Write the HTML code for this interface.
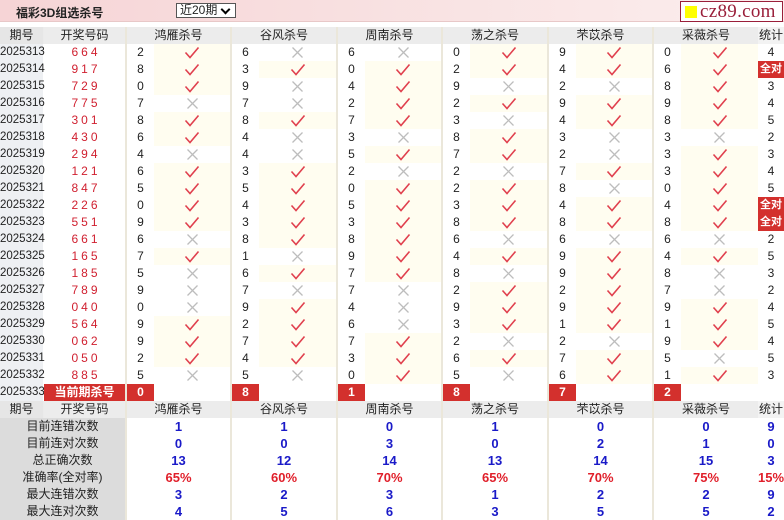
<!DOCTYPE html>
<html><head><meta charset="utf-8">
<style>
*{margin:0;padding:0;box-sizing:border-box}
body{width:784px;height:520px;overflow:hidden;background:#fff;font-family:"Liberation Sans","Noto Sans CJK SC",sans-serif;font-size:12px;color:#222;position:relative}
.top{position:absolute;left:0;top:0;width:784px;height:22px;background:linear-gradient(90deg,#f6d4d6 0%,#f9e4e4 60%,#fbeeee 100%);border-bottom:1px solid #e8c8c8}
.title{position:absolute;left:16px;top:4px;font-size:12px;font-weight:bold;color:#222}
.sel{position:absolute;left:176px;top:3px;width:60px;height:15px;border:1px solid #555;background:#fff;font-size:12px;line-height:13px;padding-left:3px}
.sel:after{content:"";position:absolute;right:6px;top:2px;width:5px;height:5px;border-right:2px solid #000;border-bottom:2px solid #000;transform:rotate(45deg)}
.logo{position:absolute;left:680px;top:1px;width:103px;height:21px;border:1px solid #9a1f3a;background:#fff;font-family:"Liberation Serif",serif;font-size:19px;color:#9a1f3a;line-height:19px;letter-spacing:0.3px;white-space:nowrap;overflow:hidden}
.logo i{display:inline-block;width:12px;height:12px;background:#ffff00;margin:0 3px 0 4px;vertical-align:-1px}
.tb{position:absolute;left:0;top:27px;width:784px}
.r{display:flex;height:17px;line-height:17px}
.r>*{flex:none;text-align:center;display:block;height:17px}
.p{width:43px;background:#eef0f3;font-size:11.5px;margin-right:1px}
.d{width:81px;color:#d01f2f;letter-spacing:3px;padding-left:3px}
.g{display:flex;border-left:2px solid #ebe7da}
.g5{width:105px}.g6{width:106px}
.g u{text-decoration:none;width:27px;text-align:center;display:block}
.g em{display:block;flex:1;height:17px}
.g em.y{background:#fffdf0}
.st{width:26px}
svg{display:block;margin:0 auto}
.h{background:#ebebeb}
.h .p{background:#e6e6e6;font-size:12px}
.h .d{color:#222;letter-spacing:0;background:#ececec;padding:0}
.h .g{justify-content:center;background:#ececec}
.h .st{background:#f3f3f3}
.all{background:#d3302d;color:#fff;font-weight:bold;font-size:11px}
.cur .d{background:#d3302d;color:#fff;font-weight:bold;letter-spacing:0;padding:0}
.cur .g u{background:#d3302d;color:#fff;font-weight:bold}
.s .lab{width:125px;background:#dcdcdc;font-size:12px}
.s .g{justify-content:center;color:#1a1ac8;font-weight:bold;font-size:13px}
.s .st{color:#1a1ac8;font-weight:bold;font-size:13px}
.s.pc .g,.s.pc .st{color:#e01f2a}
</style></head><body>
<svg width="0" height="0" style="position:absolute">
<symbol id="ok" viewBox="0 0 16 13"><path d="M1.5 6.5 L6 11.5 L14.5 1.5" fill="none" stroke="#e0404e" stroke-width="1.6"/></symbol>
<symbol id="no" viewBox="0 0 13 13"><path d="M1.5 1.5 L11.5 11.5 M11.5 1.5 L1.5 11.5" fill="none" stroke="#bdbdbd" stroke-width="1.3"/></symbol>
</svg>
<div class="top"><div class="title">福彩3D组选杀号</div><div class="sel">近20期</div><div class="logo"><i></i>cz89.com</div></div>
<div class="tb">
<div class="r h"><span class="p">期号</span><span class="d">开奖号码</span><span class="g g5">鸿雁杀号</span><span class="g g6">谷风杀号</span><span class="g g5">周南杀号</span><span class="g g6">荡之杀号</span><span class="g g5">芣苡杀号</span><span class="g g6">采薇杀号</span><span class="st">统计</span></div>
<div class="r"><span class="p">2025313</span><span class="d">664</span><span class="g g5"><u>2</u><em class="y"><svg width="16" height="17"><use href="#ok" y="2" width="16" height="13"/></svg></em></span><span class="g g6"><u>6</u><em><svg width="13" height="17"><use href="#no" y="2" width="13" height="13"/></svg></em></span><span class="g g5"><u>6</u><em><svg width="13" height="17"><use href="#no" y="2" width="13" height="13"/></svg></em></span><span class="g g6"><u>0</u><em class="y"><svg width="16" height="17"><use href="#ok" y="2" width="16" height="13"/></svg></em></span><span class="g g5"><u>9</u><em class="y"><svg width="16" height="17"><use href="#ok" y="2" width="16" height="13"/></svg></em></span><span class="g g6"><u>0</u><em class="y"><svg width="16" height="17"><use href="#ok" y="2" width="16" height="13"/></svg></em></span><span class="st">4</span></div>
<div class="r"><span class="p">2025314</span><span class="d">917</span><span class="g g5"><u>8</u><em class="y"><svg width="16" height="17"><use href="#ok" y="2" width="16" height="13"/></svg></em></span><span class="g g6"><u>3</u><em class="y"><svg width="16" height="17"><use href="#ok" y="2" width="16" height="13"/></svg></em></span><span class="g g5"><u>0</u><em class="y"><svg width="16" height="17"><use href="#ok" y="2" width="16" height="13"/></svg></em></span><span class="g g6"><u>2</u><em class="y"><svg width="16" height="17"><use href="#ok" y="2" width="16" height="13"/></svg></em></span><span class="g g5"><u>4</u><em class="y"><svg width="16" height="17"><use href="#ok" y="2" width="16" height="13"/></svg></em></span><span class="g g6"><u>6</u><em class="y"><svg width="16" height="17"><use href="#ok" y="2" width="16" height="13"/></svg></em></span><span class="st all">全对</span></div>
<div class="r"><span class="p">2025315</span><span class="d">729</span><span class="g g5"><u>0</u><em class="y"><svg width="16" height="17"><use href="#ok" y="2" width="16" height="13"/></svg></em></span><span class="g g6"><u>9</u><em><svg width="13" height="17"><use href="#no" y="2" width="13" height="13"/></svg></em></span><span class="g g5"><u>4</u><em class="y"><svg width="16" height="17"><use href="#ok" y="2" width="16" height="13"/></svg></em></span><span class="g g6"><u>9</u><em><svg width="13" height="17"><use href="#no" y="2" width="13" height="13"/></svg></em></span><span class="g g5"><u>2</u><em><svg width="13" height="17"><use href="#no" y="2" width="13" height="13"/></svg></em></span><span class="g g6"><u>8</u><em class="y"><svg width="16" height="17"><use href="#ok" y="2" width="16" height="13"/></svg></em></span><span class="st">3</span></div>
<div class="r"><span class="p">2025316</span><span class="d">775</span><span class="g g5"><u>7</u><em><svg width="13" height="17"><use href="#no" y="2" width="13" height="13"/></svg></em></span><span class="g g6"><u>7</u><em><svg width="13" height="17"><use href="#no" y="2" width="13" height="13"/></svg></em></span><span class="g g5"><u>2</u><em class="y"><svg width="16" height="17"><use href="#ok" y="2" width="16" height="13"/></svg></em></span><span class="g g6"><u>2</u><em class="y"><svg width="16" height="17"><use href="#ok" y="2" width="16" height="13"/></svg></em></span><span class="g g5"><u>9</u><em class="y"><svg width="16" height="17"><use href="#ok" y="2" width="16" height="13"/></svg></em></span><span class="g g6"><u>9</u><em class="y"><svg width="16" height="17"><use href="#ok" y="2" width="16" height="13"/></svg></em></span><span class="st">4</span></div>
<div class="r"><span class="p">2025317</span><span class="d">301</span><span class="g g5"><u>8</u><em class="y"><svg width="16" height="17"><use href="#ok" y="2" width="16" height="13"/></svg></em></span><span class="g g6"><u>8</u><em class="y"><svg width="16" height="17"><use href="#ok" y="2" width="16" height="13"/></svg></em></span><span class="g g5"><u>7</u><em class="y"><svg width="16" height="17"><use href="#ok" y="2" width="16" height="13"/></svg></em></span><span class="g g6"><u>3</u><em><svg width="13" height="17"><use href="#no" y="2" width="13" height="13"/></svg></em></span><span class="g g5"><u>4</u><em class="y"><svg width="16" height="17"><use href="#ok" y="2" width="16" height="13"/></svg></em></span><span class="g g6"><u>8</u><em class="y"><svg width="16" height="17"><use href="#ok" y="2" width="16" height="13"/></svg></em></span><span class="st">5</span></div>
<div class="r"><span class="p">2025318</span><span class="d">430</span><span class="g g5"><u>6</u><em class="y"><svg width="16" height="17"><use href="#ok" y="2" width="16" height="13"/></svg></em></span><span class="g g6"><u>4</u><em><svg width="13" height="17"><use href="#no" y="2" width="13" height="13"/></svg></em></span><span class="g g5"><u>3</u><em><svg width="13" height="17"><use href="#no" y="2" width="13" height="13"/></svg></em></span><span class="g g6"><u>8</u><em class="y"><svg width="16" height="17"><use href="#ok" y="2" width="16" height="13"/></svg></em></span><span class="g g5"><u>3</u><em><svg width="13" height="17"><use href="#no" y="2" width="13" height="13"/></svg></em></span><span class="g g6"><u>3</u><em><svg width="13" height="17"><use href="#no" y="2" width="13" height="13"/></svg></em></span><span class="st">2</span></div>
<div class="r"><span class="p">2025319</span><span class="d">294</span><span class="g g5"><u>4</u><em><svg width="13" height="17"><use href="#no" y="2" width="13" height="13"/></svg></em></span><span class="g g6"><u>4</u><em><svg width="13" height="17"><use href="#no" y="2" width="13" height="13"/></svg></em></span><span class="g g5"><u>5</u><em class="y"><svg width="16" height="17"><use href="#ok" y="2" width="16" height="13"/></svg></em></span><span class="g g6"><u>7</u><em class="y"><svg width="16" height="17"><use href="#ok" y="2" width="16" height="13"/></svg></em></span><span class="g g5"><u>2</u><em><svg width="13" height="17"><use href="#no" y="2" width="13" height="13"/></svg></em></span><span class="g g6"><u>3</u><em class="y"><svg width="16" height="17"><use href="#ok" y="2" width="16" height="13"/></svg></em></span><span class="st">3</span></div>
<div class="r"><span class="p">2025320</span><span class="d">121</span><span class="g g5"><u>6</u><em class="y"><svg width="16" height="17"><use href="#ok" y="2" width="16" height="13"/></svg></em></span><span class="g g6"><u>3</u><em class="y"><svg width="16" height="17"><use href="#ok" y="2" width="16" height="13"/></svg></em></span><span class="g g5"><u>2</u><em><svg width="13" height="17"><use href="#no" y="2" width="13" height="13"/></svg></em></span><span class="g g6"><u>2</u><em><svg width="13" height="17"><use href="#no" y="2" width="13" height="13"/></svg></em></span><span class="g g5"><u>7</u><em class="y"><svg width="16" height="17"><use href="#ok" y="2" width="16" height="13"/></svg></em></span><span class="g g6"><u>3</u><em class="y"><svg width="16" height="17"><use href="#ok" y="2" width="16" height="13"/></svg></em></span><span class="st">4</span></div>
<div class="r"><span class="p">2025321</span><span class="d">847</span><span class="g g5"><u>5</u><em class="y"><svg width="16" height="17"><use href="#ok" y="2" width="16" height="13"/></svg></em></span><span class="g g6"><u>5</u><em class="y"><svg width="16" height="17"><use href="#ok" y="2" width="16" height="13"/></svg></em></span><span class="g g5"><u>0</u><em class="y"><svg width="16" height="17"><use href="#ok" y="2" width="16" height="13"/></svg></em></span><span class="g g6"><u>2</u><em class="y"><svg width="16" height="17"><use href="#ok" y="2" width="16" height="13"/></svg></em></span><span class="g g5"><u>8</u><em><svg width="13" height="17"><use href="#no" y="2" width="13" height="13"/></svg></em></span><span class="g g6"><u>0</u><em class="y"><svg width="16" height="17"><use href="#ok" y="2" width="16" height="13"/></svg></em></span><span class="st">5</span></div>
<div class="r"><span class="p">2025322</span><span class="d">226</span><span class="g g5"><u>0</u><em class="y"><svg width="16" height="17"><use href="#ok" y="2" width="16" height="13"/></svg></em></span><span class="g g6"><u>4</u><em class="y"><svg width="16" height="17"><use href="#ok" y="2" width="16" height="13"/></svg></em></span><span class="g g5"><u>5</u><em class="y"><svg width="16" height="17"><use href="#ok" y="2" width="16" height="13"/></svg></em></span><span class="g g6"><u>3</u><em class="y"><svg width="16" height="17"><use href="#ok" y="2" width="16" height="13"/></svg></em></span><span class="g g5"><u>4</u><em class="y"><svg width="16" height="17"><use href="#ok" y="2" width="16" height="13"/></svg></em></span><span class="g g6"><u>4</u><em class="y"><svg width="16" height="17"><use href="#ok" y="2" width="16" height="13"/></svg></em></span><span class="st all">全对</span></div>
<div class="r"><span class="p">2025323</span><span class="d">551</span><span class="g g5"><u>9</u><em class="y"><svg width="16" height="17"><use href="#ok" y="2" width="16" height="13"/></svg></em></span><span class="g g6"><u>3</u><em class="y"><svg width="16" height="17"><use href="#ok" y="2" width="16" height="13"/></svg></em></span><span class="g g5"><u>3</u><em class="y"><svg width="16" height="17"><use href="#ok" y="2" width="16" height="13"/></svg></em></span><span class="g g6"><u>8</u><em class="y"><svg width="16" height="17"><use href="#ok" y="2" width="16" height="13"/></svg></em></span><span class="g g5"><u>8</u><em class="y"><svg width="16" height="17"><use href="#ok" y="2" width="16" height="13"/></svg></em></span><span class="g g6"><u>8</u><em class="y"><svg width="16" height="17"><use href="#ok" y="2" width="16" height="13"/></svg></em></span><span class="st all">全对</span></div>
<div class="r"><span class="p">2025324</span><span class="d">661</span><span class="g g5"><u>6</u><em><svg width="13" height="17"><use href="#no" y="2" width="13" height="13"/></svg></em></span><span class="g g6"><u>8</u><em class="y"><svg width="16" height="17"><use href="#ok" y="2" width="16" height="13"/></svg></em></span><span class="g g5"><u>8</u><em class="y"><svg width="16" height="17"><use href="#ok" y="2" width="16" height="13"/></svg></em></span><span class="g g6"><u>6</u><em><svg width="13" height="17"><use href="#no" y="2" width="13" height="13"/></svg></em></span><span class="g g5"><u>6</u><em><svg width="13" height="17"><use href="#no" y="2" width="13" height="13"/></svg></em></span><span class="g g6"><u>6</u><em><svg width="13" height="17"><use href="#no" y="2" width="13" height="13"/></svg></em></span><span class="st">2</span></div>
<div class="r"><span class="p">2025325</span><span class="d">165</span><span class="g g5"><u>7</u><em class="y"><svg width="16" height="17"><use href="#ok" y="2" width="16" height="13"/></svg></em></span><span class="g g6"><u>1</u><em><svg width="13" height="17"><use href="#no" y="2" width="13" height="13"/></svg></em></span><span class="g g5"><u>9</u><em class="y"><svg width="16" height="17"><use href="#ok" y="2" width="16" height="13"/></svg></em></span><span class="g g6"><u>4</u><em class="y"><svg width="16" height="17"><use href="#ok" y="2" width="16" height="13"/></svg></em></span><span class="g g5"><u>9</u><em class="y"><svg width="16" height="17"><use href="#ok" y="2" width="16" height="13"/></svg></em></span><span class="g g6"><u>4</u><em class="y"><svg width="16" height="17"><use href="#ok" y="2" width="16" height="13"/></svg></em></span><span class="st">5</span></div>
<div class="r"><span class="p">2025326</span><span class="d">185</span><span class="g g5"><u>5</u><em><svg width="13" height="17"><use href="#no" y="2" width="13" height="13"/></svg></em></span><span class="g g6"><u>6</u><em class="y"><svg width="16" height="17"><use href="#ok" y="2" width="16" height="13"/></svg></em></span><span class="g g5"><u>7</u><em class="y"><svg width="16" height="17"><use href="#ok" y="2" width="16" height="13"/></svg></em></span><span class="g g6"><u>8</u><em><svg width="13" height="17"><use href="#no" y="2" width="13" height="13"/></svg></em></span><span class="g g5"><u>9</u><em class="y"><svg width="16" height="17"><use href="#ok" y="2" width="16" height="13"/></svg></em></span><span class="g g6"><u>8</u><em><svg width="13" height="17"><use href="#no" y="2" width="13" height="13"/></svg></em></span><span class="st">3</span></div>
<div class="r"><span class="p">2025327</span><span class="d">789</span><span class="g g5"><u>9</u><em><svg width="13" height="17"><use href="#no" y="2" width="13" height="13"/></svg></em></span><span class="g g6"><u>7</u><em><svg width="13" height="17"><use href="#no" y="2" width="13" height="13"/></svg></em></span><span class="g g5"><u>7</u><em><svg width="13" height="17"><use href="#no" y="2" width="13" height="13"/></svg></em></span><span class="g g6"><u>2</u><em class="y"><svg width="16" height="17"><use href="#ok" y="2" width="16" height="13"/></svg></em></span><span class="g g5"><u>2</u><em class="y"><svg width="16" height="17"><use href="#ok" y="2" width="16" height="13"/></svg></em></span><span class="g g6"><u>7</u><em><svg width="13" height="17"><use href="#no" y="2" width="13" height="13"/></svg></em></span><span class="st">2</span></div>
<div class="r"><span class="p">2025328</span><span class="d">040</span><span class="g g5"><u>0</u><em><svg width="13" height="17"><use href="#no" y="2" width="13" height="13"/></svg></em></span><span class="g g6"><u>9</u><em class="y"><svg width="16" height="17"><use href="#ok" y="2" width="16" height="13"/></svg></em></span><span class="g g5"><u>4</u><em><svg width="13" height="17"><use href="#no" y="2" width="13" height="13"/></svg></em></span><span class="g g6"><u>9</u><em class="y"><svg width="16" height="17"><use href="#ok" y="2" width="16" height="13"/></svg></em></span><span class="g g5"><u>9</u><em class="y"><svg width="16" height="17"><use href="#ok" y="2" width="16" height="13"/></svg></em></span><span class="g g6"><u>9</u><em class="y"><svg width="16" height="17"><use href="#ok" y="2" width="16" height="13"/></svg></em></span><span class="st">4</span></div>
<div class="r"><span class="p">2025329</span><span class="d">564</span><span class="g g5"><u>9</u><em class="y"><svg width="16" height="17"><use href="#ok" y="2" width="16" height="13"/></svg></em></span><span class="g g6"><u>2</u><em class="y"><svg width="16" height="17"><use href="#ok" y="2" width="16" height="13"/></svg></em></span><span class="g g5"><u>6</u><em><svg width="13" height="17"><use href="#no" y="2" width="13" height="13"/></svg></em></span><span class="g g6"><u>3</u><em class="y"><svg width="16" height="17"><use href="#ok" y="2" width="16" height="13"/></svg></em></span><span class="g g5"><u>1</u><em class="y"><svg width="16" height="17"><use href="#ok" y="2" width="16" height="13"/></svg></em></span><span class="g g6"><u>1</u><em class="y"><svg width="16" height="17"><use href="#ok" y="2" width="16" height="13"/></svg></em></span><span class="st">5</span></div>
<div class="r"><span class="p">2025330</span><span class="d">062</span><span class="g g5"><u>9</u><em class="y"><svg width="16" height="17"><use href="#ok" y="2" width="16" height="13"/></svg></em></span><span class="g g6"><u>7</u><em class="y"><svg width="16" height="17"><use href="#ok" y="2" width="16" height="13"/></svg></em></span><span class="g g5"><u>7</u><em class="y"><svg width="16" height="17"><use href="#ok" y="2" width="16" height="13"/></svg></em></span><span class="g g6"><u>2</u><em><svg width="13" height="17"><use href="#no" y="2" width="13" height="13"/></svg></em></span><span class="g g5"><u>2</u><em><svg width="13" height="17"><use href="#no" y="2" width="13" height="13"/></svg></em></span><span class="g g6"><u>9</u><em class="y"><svg width="16" height="17"><use href="#ok" y="2" width="16" height="13"/></svg></em></span><span class="st">4</span></div>
<div class="r"><span class="p">2025331</span><span class="d">050</span><span class="g g5"><u>2</u><em class="y"><svg width="16" height="17"><use href="#ok" y="2" width="16" height="13"/></svg></em></span><span class="g g6"><u>4</u><em class="y"><svg width="16" height="17"><use href="#ok" y="2" width="16" height="13"/></svg></em></span><span class="g g5"><u>3</u><em class="y"><svg width="16" height="17"><use href="#ok" y="2" width="16" height="13"/></svg></em></span><span class="g g6"><u>6</u><em class="y"><svg width="16" height="17"><use href="#ok" y="2" width="16" height="13"/></svg></em></span><span class="g g5"><u>7</u><em class="y"><svg width="16" height="17"><use href="#ok" y="2" width="16" height="13"/></svg></em></span><span class="g g6"><u>5</u><em><svg width="13" height="17"><use href="#no" y="2" width="13" height="13"/></svg></em></span><span class="st">5</span></div>
<div class="r"><span class="p">2025332</span><span class="d">885</span><span class="g g5"><u>5</u><em><svg width="13" height="17"><use href="#no" y="2" width="13" height="13"/></svg></em></span><span class="g g6"><u>5</u><em><svg width="13" height="17"><use href="#no" y="2" width="13" height="13"/></svg></em></span><span class="g g5"><u>0</u><em class="y"><svg width="16" height="17"><use href="#ok" y="2" width="16" height="13"/></svg></em></span><span class="g g6"><u>5</u><em><svg width="13" height="17"><use href="#no" y="2" width="13" height="13"/></svg></em></span><span class="g g5"><u>6</u><em class="y"><svg width="16" height="17"><use href="#ok" y="2" width="16" height="13"/></svg></em></span><span class="g g6"><u>1</u><em class="y"><svg width="16" height="17"><use href="#ok" y="2" width="16" height="13"/></svg></em></span><span class="st">3</span></div>
<div class="r cur"><span class="p">2025333</span><span class="d">当前期杀号</span><span class="g g5"><u>0</u><em></em></span><span class="g g6"><u>8</u><em></em></span><span class="g g5"><u>1</u><em></em></span><span class="g g6"><u>8</u><em></em></span><span class="g g5"><u>7</u><em></em></span><span class="g g6"><u>2</u><em></em></span><span class="st"></span></div>
<div class="r h"><span class="p">期号</span><span class="d">开奖号码</span><span class="g g5">鸿雁杀号</span><span class="g g6">谷风杀号</span><span class="g g5">周南杀号</span><span class="g g6">荡之杀号</span><span class="g g5">芣苡杀号</span><span class="g g6">采薇杀号</span><span class="st">统计</span></div>
<div class="r s"><span class="lab">目前连错次数</span><span class="g g5">1</span><span class="g g6">1</span><span class="g g5">0</span><span class="g g6">1</span><span class="g g5">0</span><span class="g g6">0</span><span class="st">9</span></div>
<div class="r s"><span class="lab">目前连对次数</span><span class="g g5">0</span><span class="g g6">0</span><span class="g g5">3</span><span class="g g6">0</span><span class="g g5">2</span><span class="g g6">1</span><span class="st">0</span></div>
<div class="r s"><span class="lab">总正确次数</span><span class="g g5">13</span><span class="g g6">12</span><span class="g g5">14</span><span class="g g6">13</span><span class="g g5">14</span><span class="g g6">15</span><span class="st">3</span></div>
<div class="r s pc"><span class="lab" style="color:#222;font-weight:normal">准确率(全对率)</span><span class="g g5">65%</span><span class="g g6">60%</span><span class="g g5">70%</span><span class="g g6">65%</span><span class="g g5">70%</span><span class="g g6">75%</span><span class="st">15%</span></div>
<div class="r s"><span class="lab">最大连错次数</span><span class="g g5">3</span><span class="g g6">2</span><span class="g g5">3</span><span class="g g6">1</span><span class="g g5">2</span><span class="g g6">2</span><span class="st">9</span></div>
<div class="r s"><span class="lab">最大连对次数</span><span class="g g5">4</span><span class="g g6">5</span><span class="g g5">6</span><span class="g g6">3</span><span class="g g5">5</span><span class="g g6">5</span><span class="st">2</span></div>
</div>
</body></html>
